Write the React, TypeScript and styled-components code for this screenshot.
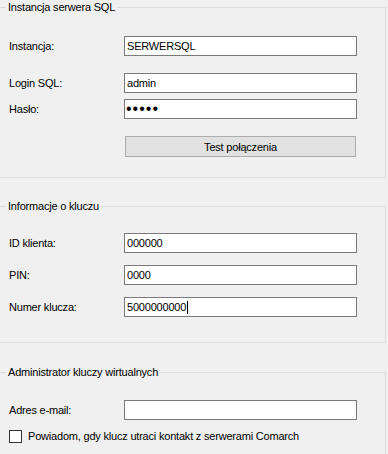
import React from "react";
import styled, { createGlobalStyle } from "styled-components";

const GlobalStyle = createGlobalStyle`
  html, body {
    margin: 0;
    padding: 0;
    background: #f0f0f0;
    overflow: hidden;
  }
  body {
    font-family: "Liberation Sans", Arial, sans-serif;
    font-size: 11px;
    letter-spacing: -0.2px;
    color: #000;
  }
`;

const Page = styled.div`
  display: flex;
  flex-direction: column;
  padding-top: 1px;
  height: 454px;
  overflow: hidden;
`;

const Group = styled.fieldset<{ gap: number; bottom: number }>`
  box-sizing: border-box;
  margin: ${(p) => p.gap}px 0 0 -1px;
  width: 387px;
  min-width: 0;
  padding: 0 0 ${(p) => p.bottom}px 0;
  border: 1px solid #dcdcdc;
  flex-shrink: 0;
`;

const Legend = styled.legend`
  margin-left: 6px;
  padding: 0 2px;
  line-height: 13px;
  font-size: 11px;
`;

const Row = styled.div<{ top: number }>`
  display: flex;
  align-items: center;
  height: 20px;
  margin-top: ${(p) => p.top}px;
  padding-left: 9px;
`;

const Label = styled.label`
  width: 115px;
  line-height: 13px;
`;

const TextBox = styled.input`
  box-sizing: border-box;
  width: 233px;
  height: 20px;
  margin: 0;
  padding: 0 2px;
  border: 1px solid #7a7a7a;
  background: #fff;
  font-family: "Liberation Sans", Arial, sans-serif;
  font-size: 11px;
  letter-spacing: -0.2px;
  color: #000;
  outline: none;
`;

const PasswordBox = styled(TextBox)`
  font-size: 16px;
  letter-spacing: 1px;
  padding-left: 1px;
`;

const FocusedBox = styled.div`
  box-sizing: border-box;
  display: flex;
  align-items: center;
  width: 233px;
  height: 20px;
  padding: 0 2px;
  border: 1px solid #7a7a7a;
  background: #fff;
  font-size: 11px;
  line-height: 13px;
`;

const Caret = styled.span`
  display: inline-block;
  width: 1px;
  height: 13px;
  margin-left: 1px;
  background: #000;
`;

const ButtonRow = styled.div<{ top: number }>`
  display: flex;
  margin-top: ${(p) => p.top}px;
  padding-left: 125px;
`;

const Button = styled.button`
  box-sizing: border-box;
  width: 231px;
  height: 21px;
  margin: 0;
  padding: 0;
  border: 1px solid #adadad;
  background: #e1e1e1;
  font-family: "Liberation Sans", Arial, sans-serif;
  font-size: 11px;
  letter-spacing: -0.2px;
  color: #000;
`;

const CheckRow = styled.label<{ top: number }>`
  display: flex;
  align-items: center;
  gap: 6px;
  height: 13px;
  margin-top: ${(p) => p.top}px;
  padding-left: 9px;
  line-height: 13px;
`;

const CheckBox = styled.span`
  box-sizing: border-box;
  width: 13px;
  height: 13px;
  border: 1px solid #333;
  background: #fff;
  flex-shrink: 0;
`;

const App = () => {
  return (
    <>
      <GlobalStyle />
      <Page>
        <Group gap={0} bottom={20}>
          <Legend>Instancja serwera SQL</Legend>
          <Row top={22}>
            <Label>Instancja:</Label>
            <TextBox defaultValue="SERWERSQL" />
          </Row>
          <Row top={17}>
            <Label>Login SQL:</Label>
            <TextBox defaultValue="admin" />
          </Row>
          <Row top={6}>
            <Label>Hasło:</Label>
            <PasswordBox type="password" defaultValue="12345" />
          </Row>
          <ButtonRow top={17}>
            <Button>Test połączenia</Button>
          </ButtonRow>
        </Group>

        <Group gap={22} bottom={25}>
          <Legend>Informacje o kluczu</Legend>
          <Row top={20}>
            <Label>ID klienta:</Label>
            <TextBox defaultValue="000000" />
          </Row>
          <Row top={12}>
            <Label>PIN:</Label>
            <TextBox defaultValue="0000" />
          </Row>
          <Row top={12}>
            <Label>Numer klucza:</Label>
            <FocusedBox>
              5000000000
              <Caret />
            </FocusedBox>
          </Row>
        </Group>

        <Group gap={23} bottom={40}>
          <Legend>Administrator kluczy wirtualnych</Legend>
          <Row top={21}>
            <Label>Adres e-mail:</Label>
            <TextBox defaultValue="" />
          </Row>
          <CheckRow top={10}>
            <CheckBox />
            Powiadom, gdy klucz utraci kontakt z serwerami Comarch
          </CheckRow>
        </Group>
      </Page>
    </>
  );
};

export default App;
